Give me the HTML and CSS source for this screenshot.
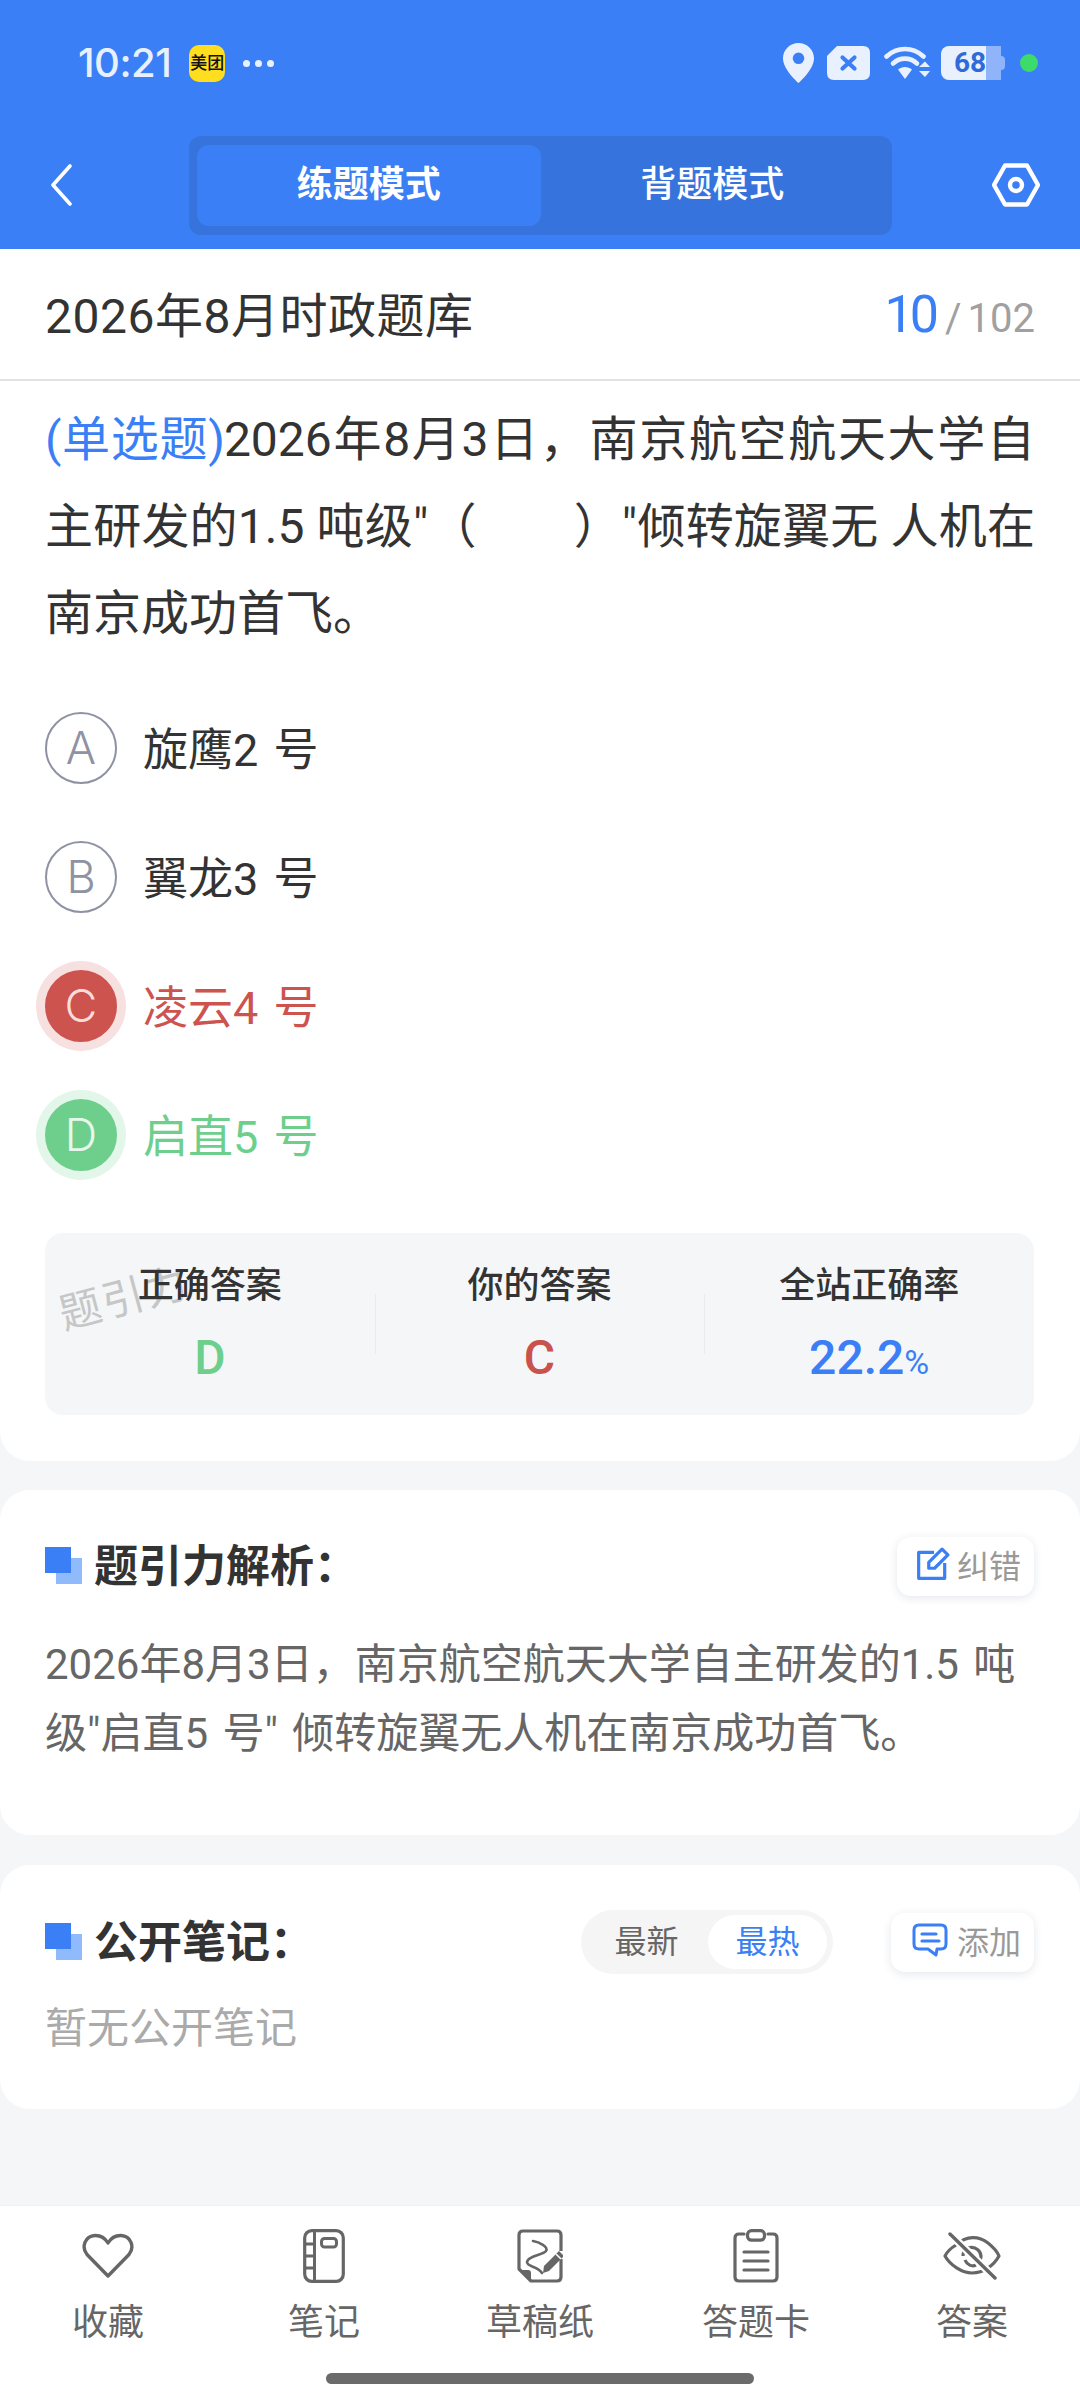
FILE: index.html
```html
<!DOCTYPE html>
<html lang="zh-CN">
<head>
<meta charset="utf-8">
<title>2026年8月时政题库</title>
<link rel="stylesheet" href="styles.css">
</head>
<body>
<div class="page">
  <header class="header">
    <div class="status">
      <div class="status-left">
        <span class="time">10:21</span>
        <span class="app-badge">美团</span>
        <span class="dots"><i></i><i></i><i></i></span>
      </div>
      <div class="status-right">
        <svg class="s-pin" viewBox="0 0 31 40"><path fill-rule="evenodd" fill="#eaf1fe" d="M15.5 0C7 0 0 6.8 0 15.2 0 25 11 36 15.5 40 20 36 31 25 31 15.2 31 6.8 24 0 15.5 0Zm0 9.500a5.800 5.800 0 1 1 0 11.600 5.800 5.800 0 0 1 0-11.600Z"/></svg>
        <svg class="s-sim" viewBox="0 0 43 34"><path fill="#eaf1fe" d="M10 0H36Q43 0 43 7V27Q43 34 36 34H7Q0 34 0 27V10Z"/><path d="M15.500 11.500 27.500 22.500M27.500 11.500 15.500 22.500" stroke="#3b7ff6" stroke-width="4.200" stroke-linecap="round"/></svg>
        <svg class="s-wifi" viewBox="0 0 46 34"><g fill="none" stroke="#eaf1fe" stroke-width="4.600" stroke-linecap="round"><path d="M2.500 10.500C13 .5 29 .5 39.500 10.500"/><path d="M9 17.500C16 11 26 11 33 17.500"/></g><path fill="#eaf1fe" d="M14 23.500C18 20 24 20 28 23.500L21 33ZM35 21l6-5.500 5 5.500ZM35 25h11l-5 6Z"/></svg>
        <div class="s-batt"><span class="batt-num">68</span></div>
        <span class="s-dot"></span>
      </div>
    </div>
    <div class="nav">
      <svg class="back" viewBox="0 0 22 42"><path d="M20 2 3 21 20 40" fill="none" stroke="#fff" stroke-width="3.600" stroke-linecap="round" stroke-linejoin="round"/></svg>
      <div class="tabs">
        <span class="tab tab-on">练题模式</span>
        <span class="tab">背题模式</span>
      </div>
      <svg class="gear" viewBox="0 0 48 44"><path d="M13 2.500H35L46 22 35 41.500H13L2 22Z" fill="none" stroke="#fff" stroke-width="4.400" stroke-linejoin="round"/><circle cx="24" cy="22" r="6" fill="none" stroke="#fff" stroke-width="4.400"/></svg>
    </div>
  </header>

  <section class="card card-q">
    <div class="qhead">
      <span class="qbank">2026年8月时政题库</span>
      <span class="qcount"><b>10</b><em>/</em><span>102</span></span>
    </div>
    <p class="qtext"><span class="qtype">(单选题)</span>2026年8月3日，南京航空航天大学自主研发的1.5 吨级"（&nbsp;&nbsp;&nbsp;&nbsp;&nbsp;&nbsp;&nbsp;&nbsp;）"倾转旋翼无 人机在南京成功首飞。</p>
    <div class="options">
      <div class="opt"><span class="letter">A</span><span class="opt-t">旋鹰2 号</span></div>
      <div class="opt"><span class="letter">B</span><span class="opt-t">翼龙3 号</span></div>
      <div class="opt opt-bad"><span class="letter">C</span><span class="opt-t">凌云4 号</span></div>
      <div class="opt opt-good"><span class="letter">D</span><span class="opt-t">启直5 号</span></div>
    </div>
    <div class="stats">
      <span class="watermark">题引力</span>
      <div class="stat"><span class="stat-l">正确答案</span><span class="stat-v green">D</span></div>
      <div class="stat"><span class="stat-l">你的答案</span><span class="stat-v red">C</span></div>
      <div class="stat"><span class="stat-l">全站正确率</span><span class="stat-v blue">22.2<small>%</small></span></div>
    </div>
  </section>

  <section class="card card-a">
    <div class="sec-head">
      <span class="squares"></span>
      <h2 class="sec-title">题引力解析：</h2>
      <span class="chip">
        <svg class="chip-ic" viewBox="0 0 32 32"><path d="M17 5H2.500V29.500H27V15" fill="none" stroke="#3b7ff6" stroke-width="3" stroke-linejoin="round"/><path d="M12 20V14.500L24.500 2 30 7.500 17.500 20Z" fill="none" stroke="#3b7ff6" stroke-width="3" stroke-linejoin="round"/></svg>
        纠错
      </span>
    </div>
    <p class="atext">2026年8月3日，南京航空航天大学自主研发的1.5 吨级"启直5 号" 倾转旋翼无人机在南京成功首飞。</p>
  </section>

  <section class="card card-n">
    <div class="sec-head">
      <span class="squares"></span>
      <h2 class="sec-title">公开笔记：</h2>
      <div class="seg"><span class="seg-i">最新</span><span class="seg-i seg-on">最热</span></div>
      <span class="chip chip-add">
        <svg class="chip-ic2" viewBox="0 0 36 34"><path d="M7 2H29Q34 2 34 7V21Q34 26 29 26H25L24 32 16 26H7Q2 26 2 21V7Q2 2 7 2Z" fill="none" stroke="#3b7ff6" stroke-width="3" stroke-linejoin="round"/><path d="M10 11H24M10 18H27" stroke="#3b7ff6" stroke-width="3.200" stroke-linecap="round"/></svg>
        添加
      </span>
    </div>
    <p class="ntext">暂无公开笔记</p>
  </section>

  <div class="spacer"></div>

  <nav class="bottom">
    <div class="bitems">
      <div class="bitem">
        <span class="bicon"><svg width="52" height="46" viewBox="0 0 52 46"><path d="M26 43 5 21.500C-1 14 3 3 13 2.500 19 2.300 23 5 26 10 29 5 33 2.300 39 2.500 49 3 53 14 47 21.500Z" fill="none" stroke="#666" stroke-width="3.400" stroke-linejoin="round"/></svg></span>
        <span>收藏</span>
      </div>
      <div class="bitem">
        <span class="bicon"><svg width="42" height="54" viewBox="0 0 42 54"><rect x="1.700" y="1.700" width="38.600" height="50.600" rx="7" fill="none" stroke="#666" stroke-width="3.200"/><path d="M11.500 2V52M2 15H11.500M2 27H11.500M2 39H11.500" stroke="#666" stroke-width="3" fill="none"/><rect x="18.500" y="9.500" width="15" height="8.500" rx="3" fill="none" stroke="#666" stroke-width="3"/></svg></span>
        <span>笔记</span>
      </div>
      <div class="bitem">
        <span class="bicon"><svg width="46" height="54" viewBox="0 0 46 54"><path d="M44 22V6Q44 2 40 2H6Q2 2 2 6V40L14 52H40Q44 52 44 48V30" fill="none" stroke="#666" stroke-width="3.200" stroke-linejoin="round"/><path d="M3 41H11Q14 41 14 44V51Z" fill="#666"/><path d="M16 12C22 13 32 18 29 22 26 26 11 27 10 33 10 38 21 37 25 44" fill="none" stroke="#666" stroke-width="2.600" stroke-linecap="round"/><path d="M27 37 42 22 47 27 32 42 26 44Z" fill="#666"/><path d="M39 25 44 30" stroke="#fff" stroke-width="1.600"/></svg></span>
        <span>草稿纸</span>
      </div>
      <div class="bitem">
        <span class="bicon"><svg width="46" height="54" viewBox="0 0 46 54"><path d="M11 5H6Q2 5 2 9V48Q2 52 6 52H40Q44 52 44 48V9Q44 5 40 5H35" fill="none" stroke="#666" stroke-width="3.200" stroke-linecap="round"/><rect x="14.500" y="1.700" width="17" height="9.500" rx="4" fill="none" stroke="#666" stroke-width="3.200"/><path d="M11 23H35M11 32H35M11 41H35M16 23" stroke="#666" stroke-width="3.200" stroke-linecap="round"/></svg></span>
        <span>答题卡</span>
      </div>
      <div class="bitem">
        <span class="bicon"><svg width="58" height="48" viewBox="0 0 58 48"><path d="M13 13C24 3 36 4 45 11 50 15 54 19 56 24 51 33 41 41 29 41 19 41 7 33 2 24 4 20 8 16 13 13Z" fill="none" stroke="#666" stroke-width="3.200" stroke-linejoin="round"/><path d="M20 24C20 12 37 13 38 24 38 27 37 29 35 31L24 20M22 28C24 33 29 35 33 33" fill="none" stroke="#666" stroke-width="3.200"/><path d="M7 2 52 46" stroke="#fff" stroke-width="8"/><path d="M7 2 52 46" stroke="#666" stroke-width="3.400" stroke-linecap="round"/></svg></span>
        <span>答案</span>
      </div>
    </div>
    <div class="home"></div>
  </nav>
</div>
</body>
</html>
```

FILE: styles.css
```css
* { box-sizing: border-box; }
html, body { margin: 0; padding: 0; }
body {
  width: 1080px;
  height: 2400px;
  overflow: hidden;
  background: #f5f6f8;
  font-family: Roboto, "Noto Sans CJK SC", sans-serif;
  color: #333;
}
.page { width: 1080px; height: 2400px; display: flex; flex-direction: column; }
p, h2 { margin: 0; }

/* header */
.header { height: 249px; background: #3b7ff6; flex: none; }
.status { height: 136px; padding: 43px 42px 0 78px; display: flex; justify-content: space-between; align-items: flex-start; }
.status-left { display: flex; align-items: center; height: 40px; }
.time { font-family: Inter, sans-serif; font-size: 40px; font-weight: 500; color: #e8f0fe; line-height: 40px; letter-spacing: -.5px; }
.app-badge { width: 36px; height: 37px; margin-left: 18px; border-radius: 10px; background: #ffdd1f; color: #111; font-size: 17px; font-weight: 500; line-height: 37px; text-align: center; white-space: nowrap; overflow: hidden; }
.dots { display: flex; gap: 5px; margin-left: 18px; }
.dots i { width: 7px; height: 7px; border-radius: 50%; background: #eaf1fe; }
.status-right { display: flex; align-items: center; height: 40px; }
.s-pin { width: 31px; height: 40px; }
.s-sim { width: 43px; height: 34px; margin-left: 13px; }
.s-wifi { width: 46px; height: 34px; margin-left: 14px; }
.s-batt { width: 60px; height: 34px; margin-left: 11px; border-radius: 8px 0 0 8px; position: relative; background: linear-gradient(90deg, #eaf1fe 0 75%, #8fb4fa 75% 100%); }
.s-batt::after { content: ""; position: absolute; left: 60px; top: 10px; width: 4px; height: 14px; background: #8fb4fa; border-radius: 0 4px 4px 0; }
.batt-num { position: absolute; left: 13px; top: 0; font-size: 28px; font-weight: 700; line-height: 34px; color: #2f6bd8; }
.s-dot { width: 18px; height: 18px; border-radius: 50%; background: #3ddc6a; margin-left: 19px; }

.nav { height: 99px; padding: 0 40px 0 50px; display: flex; align-items: center; }
.back { width: 22px; height: 42px; flex: none; margin-top: -2px; }
.tabs { width: 703px; height: 99px; margin-left: 117px; padding: 9px 8px; border-radius: 12px; background: #3773dd; display: flex; }
.tab { width: 344px; height: 81px; border-radius: 12px; font-size: 36px; font-weight: 500; line-height: 81px; text-align: center; color: #fff; }
.tab-on { background: #3b7ff6; font-weight: 700; }
.gear { width: 48px; height: 44px; margin-left: 100px; margin-top: -2px; flex: none; }

/* cards */
.card { background: #fff; flex: none; }
.card-q { height: 1212px; border-radius: 0 0 30px 30px; }
.qhead { height: 132px; border-bottom: 2px solid #e2e2e2; padding: 0 45px 4px; display: flex; justify-content: space-between; align-items: center; }
.qbank { font-size: 48px; color: #333; letter-spacing: .5px; }
.qcount { display: flex; align-items: baseline; color: #a0a0a0; font-size: 40px; margin-top: 4px; }
.qcount b { font-size: 52px; font-weight: 400; color: #3b7ff6; letter-spacing: -4px; }
.qcount em { font-style: normal; margin: 0 6px 0 10px; }
.qtext { margin-top: 15px; padding: 0 45px; font-size: 48px; line-height: 87px; text-align: justify; }
.qtype { color: #3b7ff6; letter-spacing: -1px; }

.options { margin-top: 55px; padding: 0 45px; display: flex; flex-direction: column; gap: 57px; }
.opt { height: 72px; display: flex; align-items: center; font-size: 45px; gap: 26px; }
.opt-t { padding-bottom: 4px; word-spacing: 4px; }
.letter { width: 72px; height: 72px; border-radius: 50%; border: 2px solid #8f92a3; color: #8f92a3; font-family: Inter, sans-serif; font-size: 45px; font-weight: 300; text-align: center; line-height: 68px; flex: none; }
.opt-bad { color: #cc534e; }
.opt-bad .letter { background: #cc534e; border-color: #cc534e; color: #fadcdc; box-shadow: 0 0 0 9px #f7e1e0; }
.opt-good { color: #6ecf8d; }
.opt-good .letter { background: #6ecf8d; border-color: #6ecf8d; color: #e6f8ec; box-shadow: 0 0 0 9px #e3f6ea; }

.stats { position: relative; margin: 62px 46px 0 45px; height: 182px; border-radius: 18px; background: #f4f6f8; display: grid; grid-template-columns: repeat(3, 1fr); padding-top: 31px; }
.stat { position: relative; display: flex; flex-direction: column; align-items: center; }
.stat + .stat::before { content: ""; position: absolute; left: 0; top: 30px; width: 1px; height: 60px; background: #e9ebee; }
.stat-l { position: relative; font-size: 36px; font-weight: 500; line-height: 44px; color: #333; }
.stat-v { font-size: 48px; font-weight: 500; line-height: 56px; margin-top: 22px; }
.stat-v small { font-size: 34px; font-weight: 400; }
.green { color: #6ecf8d; }
.red { color: #c9524d; }
.blue { color: #3b7ff6; }
.watermark { position: absolute; left: 12px; top: 31px; font-size: 42px; color: #c6c6c6; transform: rotate(-15deg); letter-spacing: 2px; white-space: nowrap; }

.card-a { margin-top: 29px; height: 345px; border-radius: 30px; padding: 46px 46px 0 45px; }
.card-n { margin-top: 30px; height: 244px; border-radius: 30px; padding: 47px 46px 0 45px; }
.sec-head { display: flex; align-items: center; height: 60px; }
.squares { position: relative; width: 26px; height: 26px; margin-right: 23px; margin-top: -12px; flex: none; background: #3b7ff6; box-shadow: 11px 11px 0 #8fbafc; }
.sec-title { font-size: 44px; font-weight: 700; line-height: 60px; color: #333; flex: 1; padding-top: 2px; }
.chip { height: 59px; border-radius: 14px; background: #fff; box-shadow: 0 2px 10px rgba(40, 60, 100, .12); padding: 0 13px 4px 19px; display: flex; align-items: center; gap: 7px; font-size: 32px; color: #999; flex: none; }
.chip-ic { width: 34px; height: 34px; }
.chip-ic2 { width: 36px; height: 34px; margin-right: 2px; }
.chip-add { padding-left: 21px; }
.atext { margin-top: 34px; font-size: 42px; line-height: 69px; color: #666; word-spacing: 4px; }
.seg { width: 252px; height: 64px; border-radius: 32px; background: #f5f5f5; padding: 5px 6px; margin-right: 58px; display: flex; justify-content: space-between; flex: none; font-size: 32px; color: #666; }
.seg-i { width: 119px; line-height: 54px; text-align: center; border-radius: 27px; }
.seg-on { background: #fff; color: #3b7ff6; }
.ntext { margin-top: 27px; font-size: 42px; line-height: 60px; color: #aaa; }

.spacer { flex: 1; }

/* bottom bar */
.bottom { height: 195px; flex: none; background: #fff; border-top: 1px solid #f0f1f3; padding-top: 23px; display: flex; flex-direction: column; align-items: center; }
.bitems { width: 1080px; display: grid; grid-template-columns: repeat(5, 1fr); }
.bitem { display: flex; flex-direction: column; align-items: center; color: #666; font-size: 36px; line-height: 46px; }
.bicon { height: 54px; margin-bottom: 17px; display: flex; align-items: center; justify-content: center; }
.home { width: 428px; height: 11px; margin-top: 27px; border-radius: 6px; background: #6b6b6b; }
```
